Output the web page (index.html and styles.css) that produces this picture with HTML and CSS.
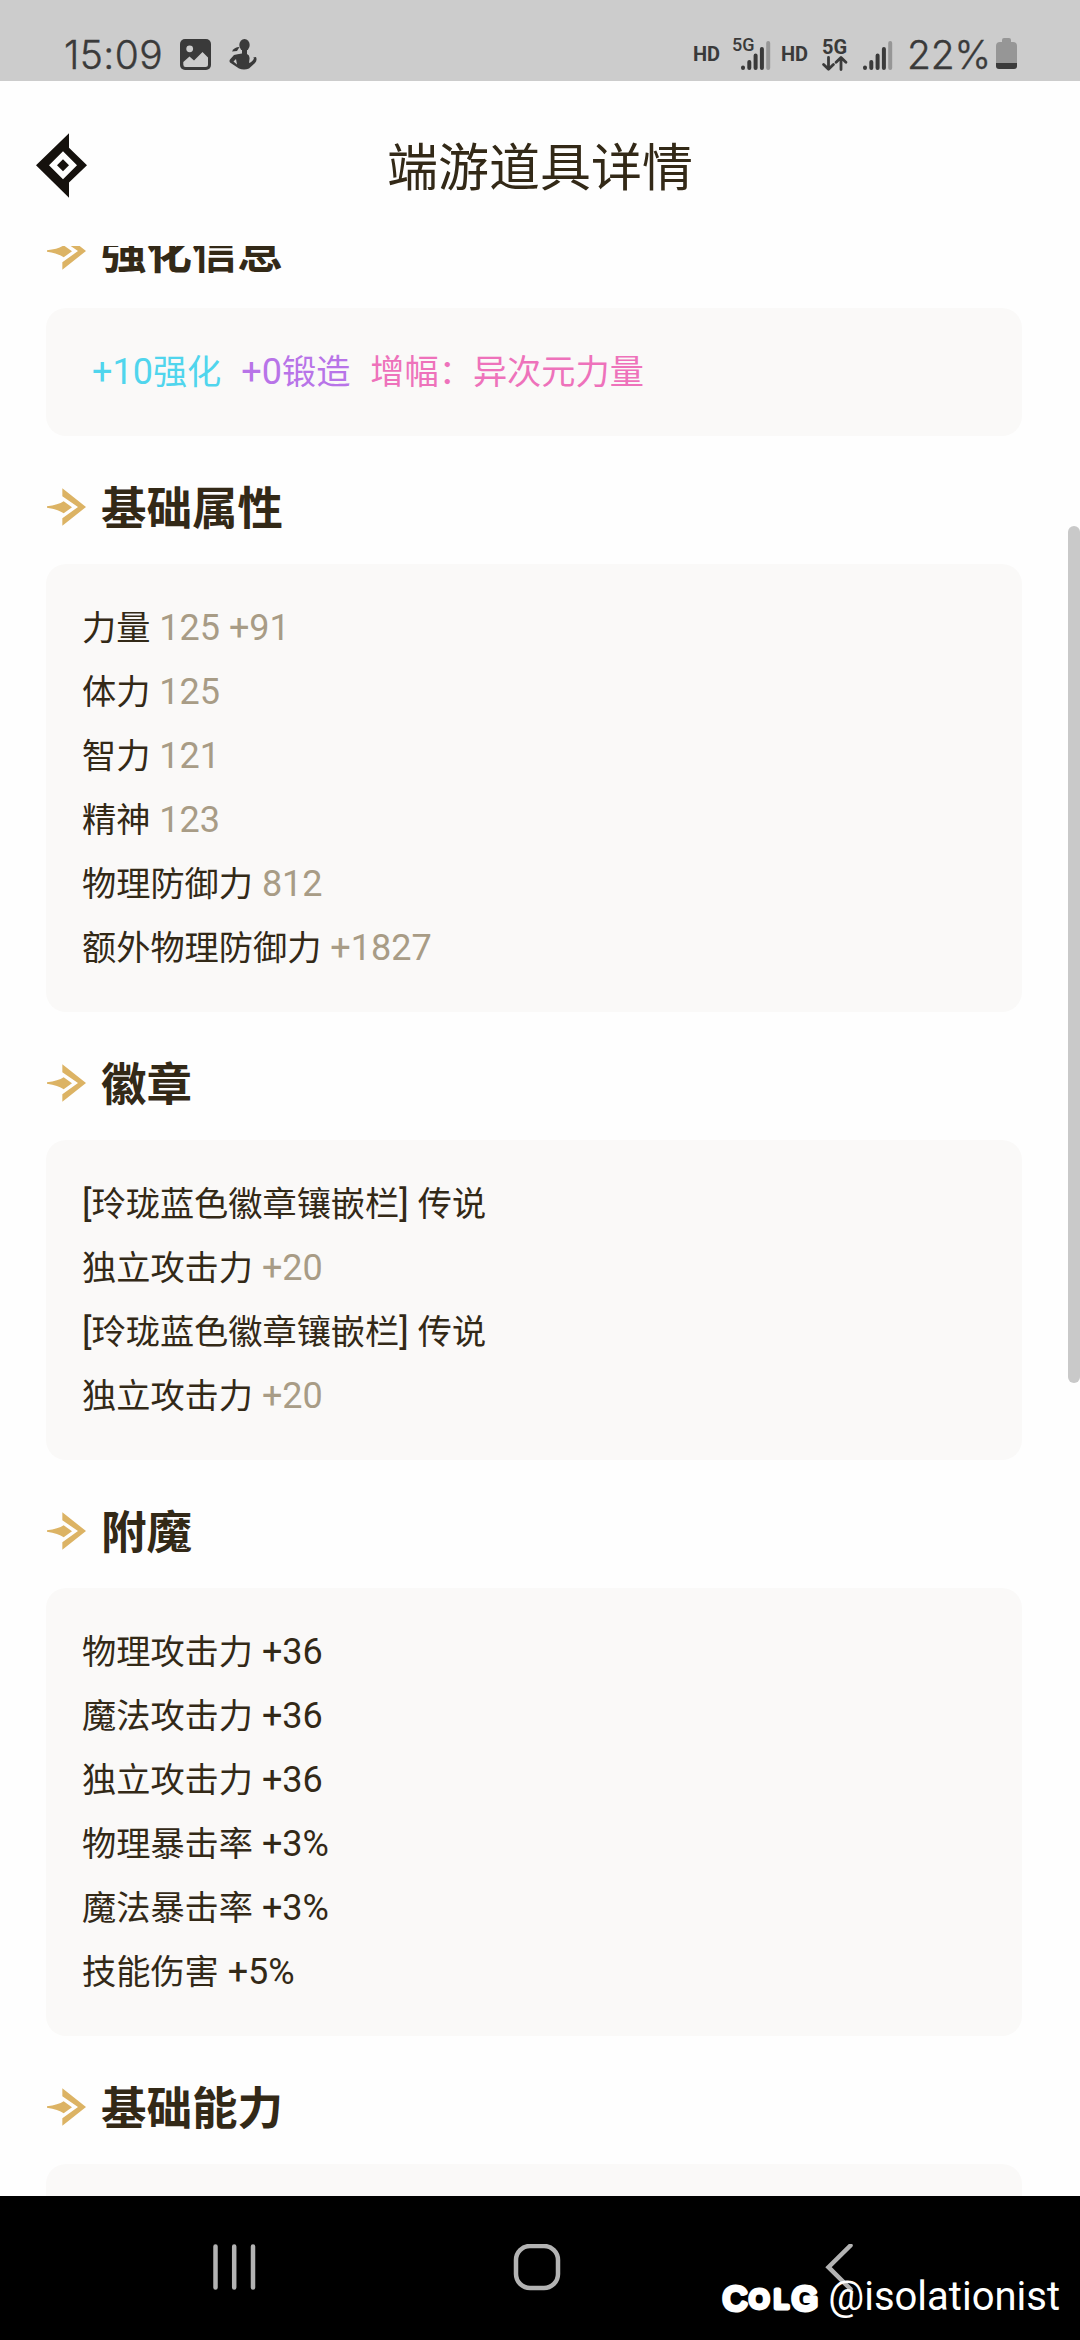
FILE: index.html
```html
<!DOCTYPE html>
<html lang="zh-CN">
<head>
    <meta charset="UTF-8">
    <meta name="viewport" content="width=device-width, initial-scale=1.0">
    <title>端游道具详情</title>
    <link rel="stylesheet" href="styles.css">
</head>
<body>
    <!-- Icons used several times -->
    <svg class="defs" width="0" height="0">
        <symbol id="arrow" viewBox="0 0 117 112">
            <path d="M46 0 117 56 46 112V90L93 56 46 24Z"/>
            <path d="M0 54Q34 50 50 39L75 57 50 75Q34 63 0 58Z"/>
        </symbol>
        <symbol id="signal" viewBox="0 0 30 30">
            <path d="M2 27.5V28M8.3 22V28M14.6 15.5V28M20.9 9V28" fill="none" stroke="#3a3a3a" stroke-width="4" stroke-linecap="round"/>
            <path d="M27.2 3V28" fill="none" stroke="#969696" stroke-width="4" stroke-linecap="round"/>
        </symbol>
    </svg>

    <div class="status-bar">
        <span class="time">15:09</span>
        <svg class="icon-photo" viewBox="0 0 31 31">
            <rect width="31" height="31" rx="5" fill="#3a3a3a"/>
            <circle cx="9.7" cy="9.8" r="3.4" fill="#cccccc"/>
            <path d="M3.3 23 9.5 17.4 14 21.5 22.5 13 28 18.5V25.5Q28 28 25.5 28H5.5Q3.3 28 3.3 25.5Z" fill="#cccccc"/>
        </svg>
        <svg class="icon-person" viewBox="0 0 28 31" fill="#3a3a3a">
            <ellipse cx="15.5" cy="6" rx="5.2" ry="6"/>
            <path d="M3 12.5Q5 8 10.5 8L8 12Z"/>
            <path d="M13 10H18V15Q21 16 20.5 20L20 24Q24 22.5 25 19L24 18.5 27 18Q28.500 21 26 24L20 29.500Q15 31.500 10 29.500L1 23.500Q0 22 1 20.500L5 16Q8 15 13 14.500ZM7 20 4.500 22.500 8 25.500Z" fill-rule="evenodd"/>
        </svg>
        <div class="status-right">
            <span class="hd">HD</span>
            <div class="net-small">
                <svg class="signal"><use href="#signal"/></svg>
                <span class="label-5g">5G</span>
            </div>
            <span class="hd">HD</span>
            <div class="net-data">
                <span>5G</span>
                <svg viewBox="0 0 26 15" fill="none" stroke="#3a3a3a" stroke-width="2.800" stroke-linecap="round" stroke-linejoin="round">
                    <path d="M6.500 1.400V13M1.600 8.500 6.500 13.300 11.400 8.500M19 13.500V2M14.100 6.300 19 1.500 23.900 6.300"/>
                </svg>
            </div>
            <svg class="signal"><use href="#signal"/></svg>
            <span class="battery-text">22%</span>
            <svg class="battery" viewBox="0 0 21 31">
                <path d="M6 3V2Q6 0 8 0H13Q15 0 15 2V4H17Q21 4 21 8V25H0V8Q0 4 4 4H6Z" fill="#969696"/>
                <path d="M0 25H21V28Q21 31 18 31H3Q0 31 0 28Z" fill="#3a3a3a"/>
            </svg>
        </div>
    </div>

    <header class="header">
        <svg class="back-icon" viewBox="0 0 153 194" fill="#15110d">
            <path d="M0 96 99 0V44L153 96 99 148V194ZM81 54 39 96 81 138 123 96Z" fill-rule="evenodd"/>
            <path d="M81 78 99 96 81 114 63 96Z"/>
        </svg>
        <h1>端游道具详情</h1>
    </header>

    <main class="content">
        <h2><svg class="arrow"><use href="#arrow"/></svg><span>强化信息</span></h2>
        <div class="card enhance">
            <span class="cyan"><b>+10</b>强化</span>
            <span class="purple"><b>+0</b>锻造</span>
            <span class="pink">增幅：异次元力量</span>
        </div>

        <h2><svg class="arrow"><use href="#arrow"/></svg><span>基础属性</span></h2>
        <div class="card">
            <p>力量<span class="value"> 125 +91</span></p>
            <p>体力<span class="value"> 125</span></p>
            <p>智力<span class="value"> 121</span></p>
            <p>精神<span class="value"> 123</span></p>
            <p>物理防御力<span class="value"> 812</span></p>
            <p>额外物理防御力<span class="value"> +1827</span></p>
        </div>

        <h2><svg class="arrow"><use href="#arrow"/></svg><span>徽章</span></h2>
        <div class="card">
            <p><b>[</b>玲珑蓝色徽章镶嵌栏<b>] </b>传说</p>
            <p>独立攻击力<span class="value"> +20</span></p>
            <p><b>[</b>玲珑蓝色徽章镶嵌栏<b>] </b>传说</p>
            <p>独立攻击力<span class="value"> +20</span></p>
        </div>

        <h2><svg class="arrow"><use href="#arrow"/></svg><span>附魔</span></h2>
        <div class="card">
            <p>物理攻击力<b> +36</b></p>
            <p>魔法攻击力<b> +36</b></p>
            <p>独立攻击力<b> +36</b></p>
            <p>物理暴击率<b> +3%</b></p>
            <p>魔法暴击率<b> +3%</b></p>
            <p>技能伤害<b> +5%</b></p>
        </div>

        <h2><svg class="arrow"><use href="#arrow"/></svg><span>基础能力</span></h2>
        <div class="card"><p></p></div>
    </main>
    <div class="scrollbar"></div>

    <nav class="nav-bar">
        <svg viewBox="0 0 48 48"><path d="M5.500 2.500V43.500M24.200 2.500V43.500M43 2.500V43.500"/></svg>
        <svg viewBox="0 0 48 48"><rect x="3" y="2" width="42" height="42" rx="14"/></svg>
        <svg viewBox="0 0 48 48"><path d="M34.500 1.500 12.500 23.200 34.500 45"/></svg>
    </nav>
    <div class="watermark">
        <svg class="logo" viewBox="0 0 98 34">
            <text y="28"><tspan x="2" font-size="33">C</tspan><tspan x="28.500" y="26" font-size="25">O</tspan><tspan x="53" y="26" font-size="26">L</tspan><tspan x="71" y="28" font-size="33">G</tspan></text>
        </svg>
        <span class="user">@isolationist</span>
    </div>
</body>
</html>
```

FILE: styles.css
```css
* {
    box-sizing: border-box;
}

body {
    margin: 0;
    width: 1080px;
    height: 2340px;
    overflow: hidden;
    position: relative;
    display: flex;
    flex-direction: column;
    background-color: #fefefe;
    color: #332917;
    font-family: Roboto, "Noto Sans CJK SC", sans-serif;
}

.defs {
    position: absolute;
}

/* Status bar */
.status-bar {
    height: 81px;
    flex: none;
    background-color: #cccccc;
    color: #3a3a3a;
    display: flex;
    align-items: flex-start;
    padding: 38px 63px 0 64px;
}

.time, .battery-text {
    font-family: Inter, sans-serif;
    font-weight: 300;
    font-size: 39px;
    line-height: 33px;
    white-space: nowrap;
    -webkit-text-stroke: 0.4px #3a3a3a;
}

.time {
    width: 116px;
    letter-spacing: 0.4px;
}

.icon-photo {
    width: 31px;
    height: 31px;
    margin-top: 1px;
}

.icon-person {
    width: 28px;
    height: 31px;
    margin: 1px 0 0 18px;
}

.status-right {
    margin-left: auto;
    display: flex;
    align-items: flex-start;
}

.hd {
    width: 28px;
    margin-top: 5px;
    font-size: 20px;
    line-height: 22px;
    font-weight: 700;
}

.net-small {
    position: relative;
    width: 30px;
    margin: 0 10px 0 20px;
}

.label-5g {
    position: absolute;
    left: -9px;
    top: -3px;
    font-size: 18px;
    line-height: 20px;
    font-weight: 500;
}

.signal {
    display: block;
    width: 30px;
    height: 30px;
    margin-top: 2px;
}

.net-data {
    width: 26px;
    margin: 0 15px 0 13px;
    font-size: 20px;
    line-height: 18px;
    font-weight: 700;
}

.net-data span, .net-data svg {
    display: block;
}

.net-data svg {
    width: 26px;
    height: 15px;
}

.battery-text {
    width: 89px;
    margin-left: 14px;
    letter-spacing: -0.2px;
}

.battery {
    width: 21px;
    height: 31px;
}

/* Header */
.header {
    height: 165px;
    flex: none;
    position: relative;
    display: flex;
    justify-content: center;
    align-items: center;
}

.header h1 {
    margin: 10px 0 0;
    font-size: 51px;
    line-height: 60px;
    font-weight: 400;
}

.back-icon {
    position: absolute;
    left: 36px;
    top: 52px;
    width: 51px;
    height: 65px;
}

/* Sections */
.content {
    height: 1950px;
    flex: none;
    overflow: hidden;
    padding: 0 58px 0 46px;
}

h2 {
    margin: 0;
    height: 128px;
    padding-bottom: 1px;
    padding-top: 15px;
    display: flex;
    align-items: center;
    font-size: 45.5px;
    font-weight: 700;
}

h2 span {
    margin-bottom: 5px;
}

.content h2:first-child {
    margin-top: -66px;
}

.arrow {
    width: 39px;
    height: 38px;
    margin: 0 15px 0 1px;
    fill: #dcb364;
}

.card {
    background-color: #faf9f8;
    border-radius: 20px;
    padding: 32px 36px;
    font-size: 34.2px;
}

.card p {
    margin: 0;
    height: 64px;
    line-height: 64px;
    white-space: pre;
}

/* Latin glyphs run slightly larger than the Chinese ones */
.card b, .value {
    font-size: 36px;
    font-weight: 400;
    line-height: 1;
}

.value {
    color: #a89c86;
}

.enhance {
    display: flex;
    gap: 20px;
    padding: 32px 46px;
    line-height: 64px;
}

.cyan {
    color: #50d5ed;
}

.purple {
    color: #b874e8;
}

.pink {
    color: #ee72bb;
}

.scrollbar {
    position: absolute;
    right: 0;
    top: 526px;
    width: 12px;
    height: 857px;
    border-radius: 6px;
    background-color: #c9c9c9;
}

/* System navigation */
.nav-bar {
    height: 144px;
    flex: none;
    background-color: #000;
    display: flex;
    justify-content: space-between;
    padding: 48px 216px 0 210px;
}

.nav-bar svg {
    width: 48px;
    height: 48px;
    fill: none;
    stroke: #b3b3b3;
    stroke-width: 4.5;
    stroke-linecap: round;
}

.watermark {
    position: absolute;
    right: 20px;
    bottom: 20px;
    height: 46px;
    display: flex;
    align-items: center;
    gap: 9px;
    color: #fff;
}

.logo {
    width: 98px;
    height: 34px;
    overflow: visible;
    margin-top: 3px;
    font-family: "Liberation Sans", sans-serif;
    fill: #fff;
    stroke: #fff;
    stroke-width: 5px;
    stroke-linejoin: round;
}

.user {
    font-size: 40px;
    line-height: 46px;
}
```
